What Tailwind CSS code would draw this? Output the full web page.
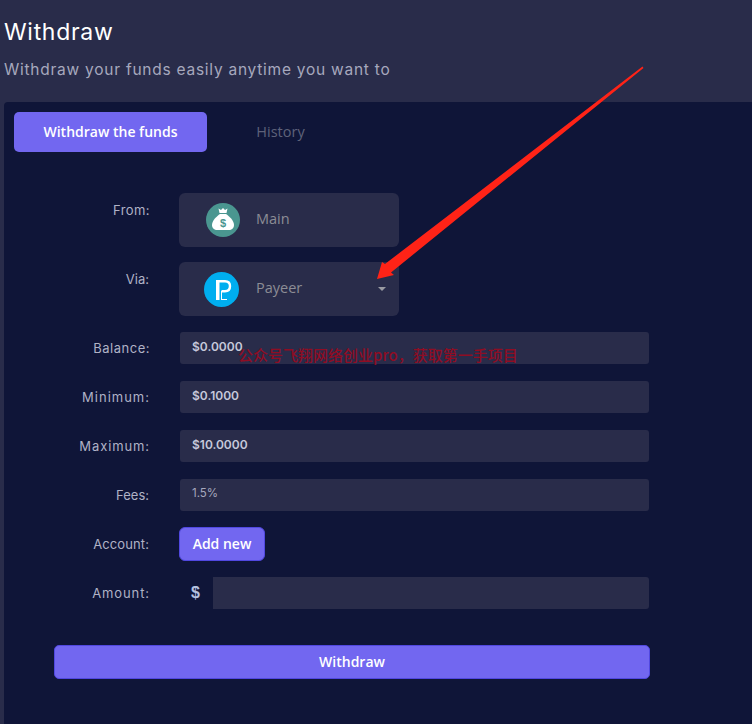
<!DOCTYPE html>
<html>
<head>
<meta charset="utf-8">
<script src="https://cdn.jsdelivr.net/npm/@tailwindcss/browser@4"></script>
</head>
<body class="m-0">
<div class="relative w-[752px] h-[724px] overflow-hidden bg-[#292c4a] font-['Inter',sans-serif]">
  <header class="h-[102px] pl-[4px] pt-[18px]">
    <h1 class="text-[23px] leading-[28px] font-normal text-white tracking-[0.7px]">Withdraw</h1>
    <p class="mt-[13px] text-[15.5px] leading-[22px] text-[#a6a8bd] tracking-[0.75px]">Withdraw your funds easily anytime you want to</p>
  </header>
  <main class="ml-[4px] h-[622px] rounded-tl-[4px] bg-[#0f1538]">
    <nav class="flex pl-[10px] pt-[10px]">
      <div class="w-[193px] h-[40px] pb-[2px] flex items-center justify-center rounded-[5px] bg-[#7267f0] text-white text-[14px] font-semibold font-['Open_Sans',sans-serif]">Withdraw the funds</div>
      <div class="w-[147px] h-[40px] flex items-center justify-center text-[#5e627a] text-[14.5px] font-['Open_Sans',sans-serif]">History</div>
    </nav>
    <form class="mt-[41px] flex flex-col">
      <div class="flex items-start h-[54px]">
        <label class="w-[146px] pt-[8px] text-right text-[13px] leading-[18px] text-[#b0b2c6] tracking-[0.4px]">From:</label>
        <div class="ml-[29px] w-[220px] h-[54px] rounded-[6px] bg-[#292c4a] flex items-center">
          <svg class="ml-[27px] w-[34px] h-[34px]" viewBox="0 0 34 34">
            <circle cx="17" cy="17" r="17" fill="#4a9690"/>
            <path d="M12.5 5.5 L15 7 L17 5 L19 7 L21.5 5.5 L20.5 10 H13.5 Z" fill="#fff"/>
            <path d="M14 11 H20 C23 13 28 17.5 28 22 C28 25.5 25.5 27 23 27 H11 C8.5 27 6 25.5 6 22 C6 17.5 11 13 14 11 Z" fill="#fff"/>
            <text x="17" y="23.5" text-anchor="middle" font-size="11" font-weight="700" fill="#4a9690" font-family="Liberation Sans">$</text>
          </svg>
          <span class="ml-[16px] -mt-[2px] text-[14.5px] text-[#8c8d95] font-['Open_Sans',sans-serif]">Main</span>
        </div>
      </div>
      <div class="flex items-start h-[54px] mt-[15px]">
        <label class="w-[145px] pt-[8px] text-right text-[13px] leading-[18px] text-[#b0b2c6]">Via:</label>
        <div class="relative ml-[30px] w-[220px] h-[54px] rounded-[6px] bg-[#292c4a] flex items-center">
          <svg class="ml-[25px] w-[35px] h-[35px]" viewBox="0 0 35 35">
            <circle cx="17.5" cy="17.5" r="17.5" fill="#00aeef"/>
            <rect x="12" y="8" width="3.5" height="20" fill="#fff"/>
            <path d="M14 9.2 H21 C24.5 9.2 26 11 26 14 C26 17.5 24 19.3 21 19.3 H17.5" fill="none" stroke="#fff" stroke-width="2.4"/>
            <rect x="17" y="19" width="1" height="9" fill="#fff"/>
            <rect x="17" y="27" width="6" height="1" fill="#fff"/>
          </svg>
          <span class="ml-[17px] -mt-[2px] text-[14.5px] text-[#8c8d95] font-['Open_Sans',sans-serif]">Payeer</span>
          <span class="absolute left-[199px] top-[25px] w-0 h-0 border-x-[4px] border-x-transparent border-t-[4px] border-t-[#9a9ba3]"></span>
        </div>
      </div>
      <div class="flex items-center h-[32px] mt-[16px]">
        <label class="w-[146px] pt-[2px] text-right text-[13px] text-[#b0b2c6] tracking-[0.5px]">Balance:</label>
        <div class="ml-[30px] w-[469px] h-[32px] rounded-[3px] bg-[#292c4a] pl-[12px] pb-[2px] flex items-center text-[12px] font-semibold text-[#c6c8da]">$0.0000</div>
      </div>
      <div class="flex items-center h-[32px] mt-[17px]">
        <label class="w-[146px] pt-[2px] text-right text-[13px] text-[#b0b2c6] tracking-[1px]">Minimum:</label>
        <div class="ml-[30px] w-[469px] h-[32px] rounded-[3px] bg-[#292c4a] pl-[12px] pb-[2px] flex items-center text-[12px] font-semibold text-[#c6c8da]">$0.1000</div>
      </div>
      <div class="flex items-center h-[32px] mt-[17px]">
        <label class="w-[146px] pt-[2px] text-right text-[13px] text-[#b0b2c6] tracking-[0.9px]">Maximum:</label>
        <div class="ml-[30px] w-[469px] h-[32px] rounded-[3px] bg-[#292c4a] pl-[12px] pb-[2px] flex items-center text-[12px] font-semibold text-[#c6c8da]">$10.0000</div>
      </div>
      <div class="flex items-center h-[32px] mt-[17px]">
        <label class="w-[145px] pt-[2px] text-right text-[13px] text-[#b0b2c6]">Fees:</label>
        <div class="ml-[31px] w-[469px] h-[32px] rounded-[3px] bg-[#292c4a] pl-[12px] pb-[2px] flex items-center text-[11.5px] text-[#a6a8bd]">1.5%</div>
      </div>
      <div class="flex items-center h-[34px] mt-[16px]">
        <label class="w-[145px] pt-[2px] text-right text-[13px] text-[#b0b2c6] tracking-[0.1px]">Account:</label>
        <div class="ml-[30px] w-[86px] h-[34px] pb-[2px] rounded-[6px] bg-[#7267f0] border border-[#5148e0] flex items-center justify-center text-white text-[14px] font-semibold font-['Open_Sans',sans-serif]">Add new</div>
      </div>
      <div class="flex items-center h-[32px] mt-[16px]">
        <label class="w-[146px] pt-[2px] text-right text-[13px] text-[#b0b2c6] tracking-[0.9px]">Amount:</label>
        <span class="w-[63px] pl-[41px] text-[16px] font-bold text-[#b4c0e0] font-['Liberation_Sans',sans-serif] text-left shrink-0">$</span>
        <div class="w-[436px] h-[32px] bg-[#292c4a] rounded-r-[3px]"></div>
      </div>
      <div class="ml-[50px] mt-[36px] w-[596px] h-[34px] pb-[2px] rounded-[5px] bg-[#7267f0] border border-[#5148e0] flex items-center justify-center text-white text-[14px] font-semibold font-['Open_Sans',sans-serif]">Withdraw</div>
    </form>
  </main>
  <div class="absolute left-[238px] top-[345px] text-[15px] leading-[20px] font-medium text-[#8f0d24] font-['Noto_Sans_CJK_SC',sans-serif]">公众号飞翔网络创业pro，获取第一手项目</div>
  <svg class="absolute left-0 top-0 pointer-events-none" width="752" height="724" viewBox="0 0 752 724">
    <path d="M643.5 68 L642.5 66.5 L385 264 L382 262 L377 279 L394 275 L391 272.5 Z" fill="#ff2317"/>
  </svg>
</div>
</body>
</html>
